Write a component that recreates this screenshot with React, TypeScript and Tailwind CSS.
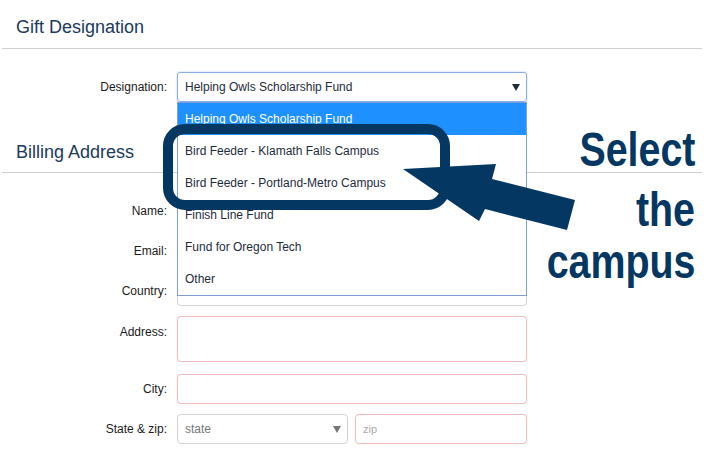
import React from "react";

const NAVY = "#053763";

function Caret({ color }: { color: string }) {
  return (
    <svg width="8" height="7" viewBox="0 0 8 7">
      <polygon points="0,0 8,0 4,7" fill={color} />
    </svg>
  );
}

function Row({ label, children, top = false }: { label: string; children: React.ReactNode; top?: boolean }) {
  return (
    <div className={`flex ${top ? "items-start" : "items-center"} gap-[10px]`}>
      <div className={`w-[165px] text-right text-[12px] text-[#1a1a1a] ${top ? "pt-[7px]" : ""}`}>{label}</div>
      {children}
    </div>
  );
}

export default function App() {
  const items = [
    "Helping Owls Scholarship Fund",
    "Bird Feeder - Klamath Falls Campus",
    "Bird Feeder - Portland-Metro Campus",
    "Finish Line Fund",
    "Fund for Oregon Tech",
    "Other",
  ];
  return (
    <div className="relative w-[712px] h-[475px] bg-white overflow-hidden font-['Liberation_Sans',Arial,sans-serif]">
      <div className="w-[700px] ml-[2px]">
        <div className="h-[49px] border-b border-[#cfcfcf] pl-[14px] pt-[16px] text-[18px] leading-[22px] text-[#1b3a5c]">
          Gift Designation
        </div>
        <div className="mt-[23px]">
          <Row label="Designation:">
            <div className="w-[350px] h-[30px] rounded-[3px] border border-[#8aaee9] shadow-[0_0_2px_#a8c4f2] flex items-center justify-between pl-[7px] pr-[6px] text-[12px] text-[#1e2b3a]">
              <span>Helping Owls Scholarship Fund</span>
              <Caret color="#1e2b3a" />
            </div>
          </Row>
        </div>
        <div className="h-[71px] border-b border-[#cfcfcf] pl-[14px] pt-[39px] text-[18px] leading-[22px] text-[#1b3a5c]">
          Billing Address
        </div>
        <div className="mt-[23px] flex flex-col gap-[10px]">
          <Row label="Name:">
            <div className="w-[350px] h-[30px] rounded-[4px] border border-[#f2bcbc]" />
          </Row>
          <Row label="Email:">
            <div className="w-[350px] h-[30px] rounded-[4px] border border-[#f2bcbc]" />
          </Row>
          <Row label="Country:">
            <div className="w-[350px] h-[30px] rounded-[4px] border border-[#d2d2d2]" />
          </Row>
          <Row label="Address:" top>
            <div className="w-[350px] h-[46px] rounded-[4px] border border-[#f2bcbc] shadow-[0_0_1px_#f5caca]" />
          </Row>
          <div className="mt-[2px]">
            <Row label="City:">
              <div className="w-[350px] h-[30px] rounded-[4px] border border-[#f2bcbc] shadow-[0_0_1px_#f5caca]" />
            </Row>
          </div>
          <Row label="State & zip:">
            <div className="w-[350px] flex gap-[7px]">
              <div className="w-[171px] h-[30px] rounded-[4px] border border-[#d2d2d2] flex items-center justify-between pl-[7px] pr-[6px] text-[12px] text-[#777]">
                <span>state</span>
                <Caret color="#777" />
              </div>
              <div className="w-[172px] h-[30px] rounded-[4px] border border-[#f2bcbc] shadow-[0_0_1px_#f5caca] flex items-center pl-[7px] text-[11px] text-[#aaa]">
                zip
              </div>
            </div>
          </Row>
        </div>
      </div>

      {/* open dropdown list */}
      <div className="absolute left-[177px] top-[102px] w-[350px] h-[194px] border border-[#7d9fd6] bg-white text-[12px] text-[#1e2b3a]">
        {items.map((t, i) => (
          <div
            key={t}
            className={`h-[32px] flex items-center pl-[7px] ${i === 0 ? "bg-[#1e90ff] text-white" : ""}`}
          >
            {t}
          </div>
        ))}
      </div>

      {/* highlight box */}
      <div className="absolute left-[163px] top-[124px] w-[287px] h-[86px] border-[10px] border-[#053763] rounded-[22px]" />

      {/* arrow */}
      <svg className="absolute left-0 top-0" width="712" height="475" viewBox="0 0 712 475">
        <polygon
          points="403,169 496,164 492,179 575,200 567,230 485,209 479,221"
          fill={NAVY}
        />
      </svg>

      {/* annotation */}
      <div className="absolute right-[17px] top-[126px] text-right font-['Liberation_Sans',Arial,sans-serif] font-bold text-[48px] leading-[48px] text-[#053763]">
        <div><span className="inline-block origin-right scale-x-[0.82]">Select</span></div>
        <div className="mt-[12px]"><span className="inline-block origin-right scale-x-[0.82]">the</span></div>
        <div className="mt-[4px]"><span className="inline-block origin-right scale-x-[0.82]">campus</span></div>
      </div>
    </div>
  );
}
